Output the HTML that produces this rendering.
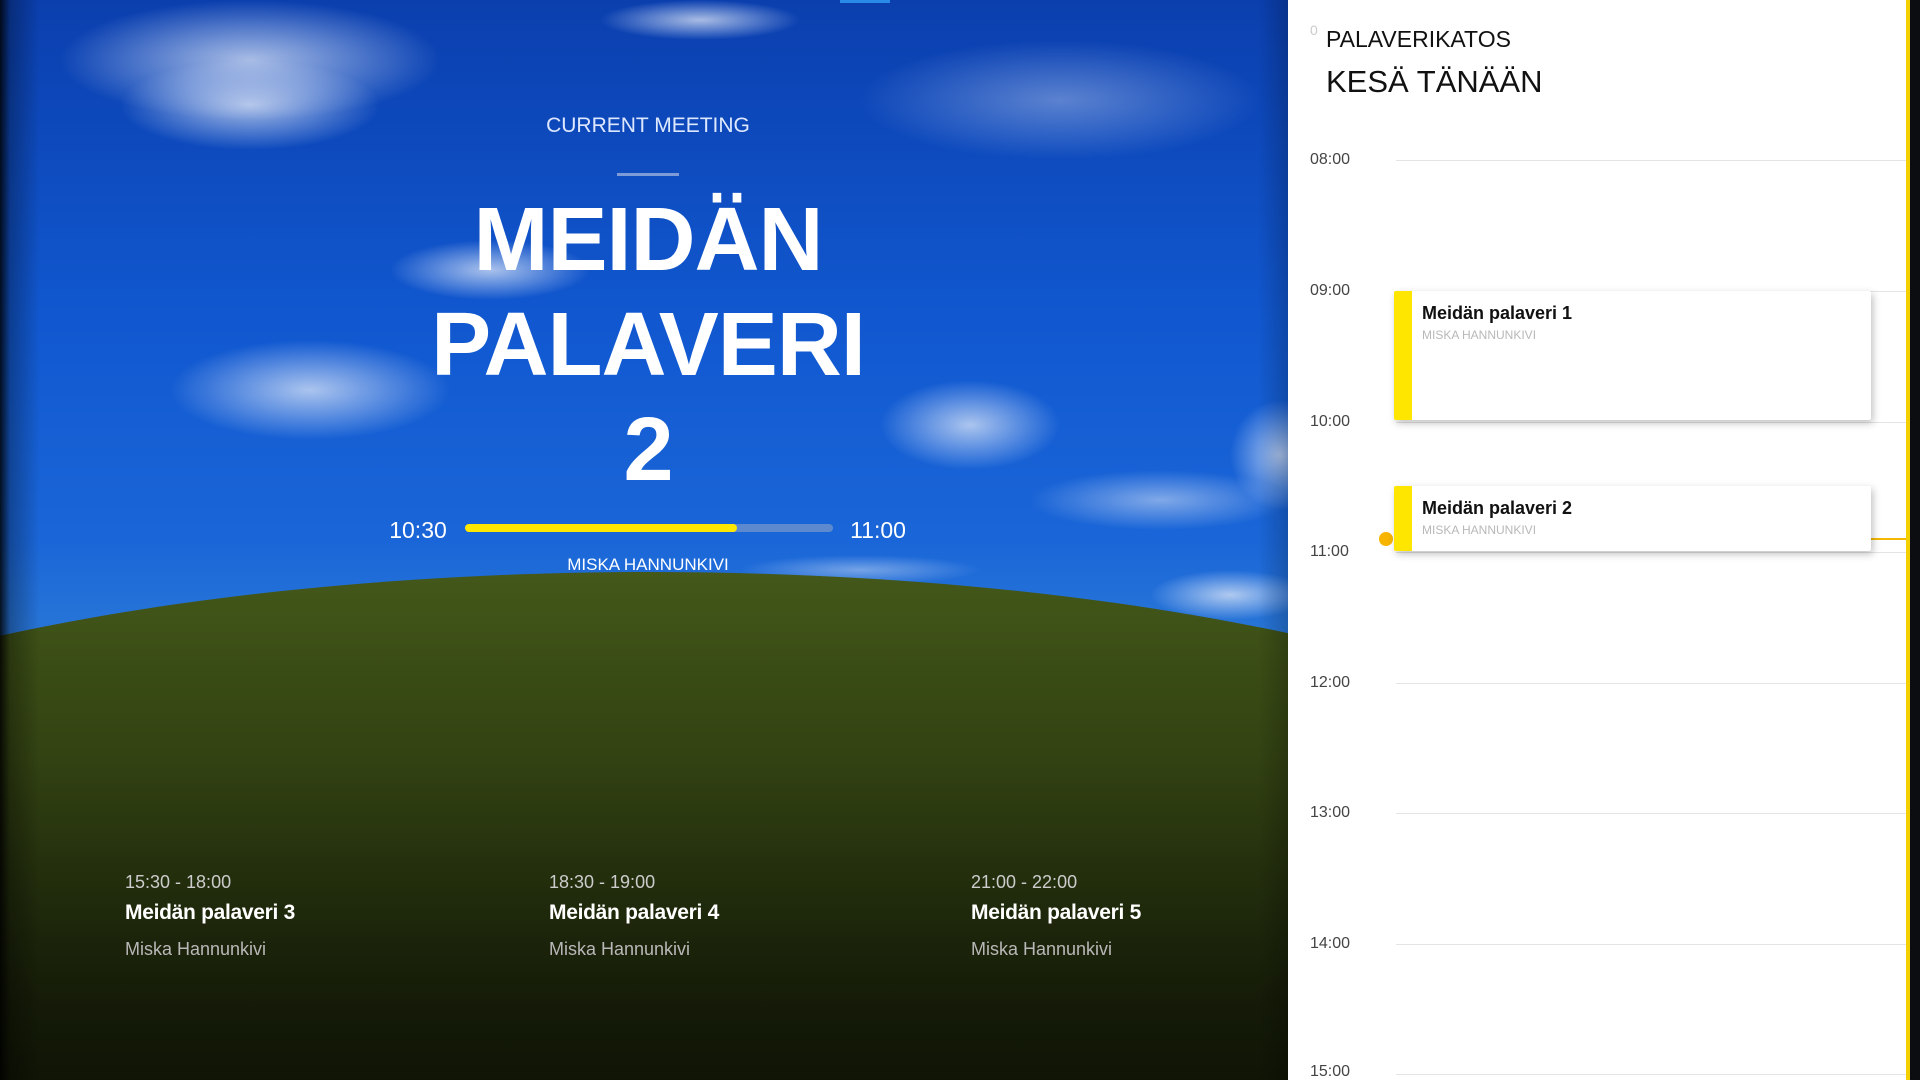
<!DOCTYPE html>
<html><head><meta charset="utf-8"><style>
*{margin:0;padding:0;box-sizing:border-box}
html,body{width:1920px;height:1080px;overflow:hidden}
body{background:#0b0d10;font-family:"Liberation Sans",sans-serif;position:relative}
#left{position:absolute;left:0;top:0;width:1288px;height:1080px;overflow:hidden;
background:linear-gradient(180deg,#0b3fae 0%,#1158d0 30%,#1a66d8 50%,#2a78d8 60%,#3a86d8 100%)}
.cloud{position:absolute;border-radius:50%;background:radial-gradient(closest-side,rgba(235,240,250,.7),rgba(220,230,250,.3) 60%,rgba(200,220,250,0));}
#hill{position:absolute;left:-450px;top:572px;width:2200px;height:660px;border-radius:50%;
background:linear-gradient(180deg,#44581a 0%,#3a4c15 15%,#2c3a10 40%,#1c250a 65%,#101505 100%)}
#vig{position:absolute;inset:0;background:
linear-gradient(90deg,rgba(0,0,0,.85) 0px,rgba(0,0,0,.3) 10px,rgba(0,0,0,0) 40px),
linear-gradient(270deg,rgba(0,0,0,.2) 0px,rgba(0,0,0,0) 30px),
linear-gradient(180deg,rgba(0,0,0,0) 70%,rgba(0,0,0,.35) 100%)}
.w{position:absolute;color:#fff;text-align:center}
#right{position:absolute;left:1288px;top:0;width:622px;height:1080px;background:#fff;border-right:4px solid #f5d000;overflow:hidden}
.hr{position:absolute;left:22px;font-size:16px;color:#444}
.ln{position:absolute;left:108px;right:0;height:1px;background:#e4e4e4}
.card{position:absolute;left:106px;width:477px;background:#fff;box-shadow:2px 3px 8px rgba(0,0,0,.25);border-left:18px solid #ffe600;border-radius:2px}
.card b{display:block;margin:12px 0 0 10px;font-size:18px;color:#111}
.card span{display:block;margin:4px 0 0 10px;font-size:12px;color:#b8b8b8}
.up{position:absolute;top:872px;color:#fff}
.up .t{font-size:18px;color:#ccc}
.up .n{font-size:21px;font-weight:bold;margin-top:8px;letter-spacing:-.3px}
.up .p{font-size:18px;color:#b8b8b8;margin-top:14px}
</style></head><body>
<div id="left">
<div class="cloud" style="left:60px;top:0;width:380px;height:120px"></div>
<div class="cloud" style="left:120px;top:60px;width:260px;height:90px"></div>
<div class="cloud" style="left:600px;top:0;width:200px;height:40px"></div>
<div class="cloud" style="left:860px;top:40px;width:400px;height:120px;opacity:.5"></div>
<div class="cloud" style="left:390px;top:240px;width:200px;height:60px"></div>
<div class="cloud" style="left:170px;top:340px;width:280px;height:100px"></div>
<div class="cloud" style="left:880px;top:380px;width:180px;height:90px"></div>
<div class="cloud" style="left:1230px;top:400px;width:100px;height:110px"></div>
<div class="cloud" style="left:1030px;top:470px;width:260px;height:60px;opacity:.7"></div>
<div class="cloud" style="left:1150px;top:570px;width:160px;height:50px"></div>
<div class="cloud" style="left:740px;top:555px;width:240px;height:30px;opacity:.6"></div>
<div id="hill"></div>
<div id="vig"></div>
<div style="position:absolute;left:840px;top:0;width:50px;height:3px;background:#2a8ae8"></div>
<div class="w" style="left:448px;width:400px;top:114px;font-size:21px;color:#dde8ff">CURRENT MEETING</div>
<div style="position:absolute;left:617px;top:173px;width:62px;height:3px;background:rgba(200,210,230,.6)"></div>
<div class="w" style="left:300px;width:696px;top:188px;font-size:90px;line-height:105px;font-weight:bold;letter-spacing:-1px">MEIDÄN<br>PALAVERI<br>2</div>
<div class="w" style="left:378px;width:80px;top:517px;font-size:23px">10:30</div>
<div style="position:absolute;left:465px;top:524px;width:368px;height:8px;border-radius:4px;background:rgba(150,170,200,.55)"></div>
<div style="position:absolute;left:465px;top:524px;width:272px;height:8px;border-radius:4px;background:#ffe800"></div>
<div class="w" style="left:840px;width:76px;top:517px;font-size:23px">11:00</div>
<div class="w" style="left:448px;width:400px;top:555px;font-size:17px">MISKA HANNUNKIVI</div>
<div class="up" style="left:125px"><div class="t">15:30 - 18:00</div><div class="n">Meidän palaveri 3</div><div class="p">Miska Hannunkivi</div></div>
<div class="up" style="left:549px"><div class="t">18:30 - 19:00</div><div class="n">Meidän palaveri 4</div><div class="p">Miska Hannunkivi</div></div>
<div class="up" style="left:971px"><div class="t">21:00 - 22:00</div><div class="n">Meidän palaveri 5</div><div class="p">Miska Hannunkivi</div></div>
</div>
<div id="right">
<div style="position:absolute;left:22px;top:22px;font-size:14px;color:#ccc">0</div>
<div style="position:absolute;left:38px;top:26px;font-size:23px;color:#111">PALAVERIKATOS</div>
<div style="position:absolute;left:38px;top:64px;font-size:31px;color:#111">KESÄ TÄNÄÄN</div>
<div class="hr" style="top:151px">08:00</div><div class="ln" style="top:160px"></div>
<div class="hr" style="top:282px">09:00</div><div class="ln" style="top:291px"></div>
<div class="hr" style="top:413px">10:00</div><div class="ln" style="top:422px"></div>
<div class="hr" style="top:543px">11:00</div><div class="ln" style="top:552px"></div>
<div class="hr" style="top:674px">12:00</div><div class="ln" style="top:683px"></div>
<div class="hr" style="top:804px">13:00</div><div class="ln" style="top:813px"></div>
<div class="hr" style="top:935px">14:00</div><div class="ln" style="top:944px"></div>
<div class="hr" style="top:1063px">15:00</div><div class="ln" style="top:1074px"></div>
<div style="position:absolute;left:106px;right:0;top:538px;height:2px;background:#f5b800"></div>
<div style="position:absolute;left:91px;top:532px;width:14px;height:14px;border-radius:50%;background:#f7b500"></div>
<div class="card" style="top:291px;height:129px"><b>Meidän palaveri 1</b><span>MISKA HANNUNKIVI</span></div>
<div class="card" style="top:486px;height:65px"><b>Meidän palaveri 2</b><span>MISKA HANNUNKIVI</span></div>
</div>
</body></html>
